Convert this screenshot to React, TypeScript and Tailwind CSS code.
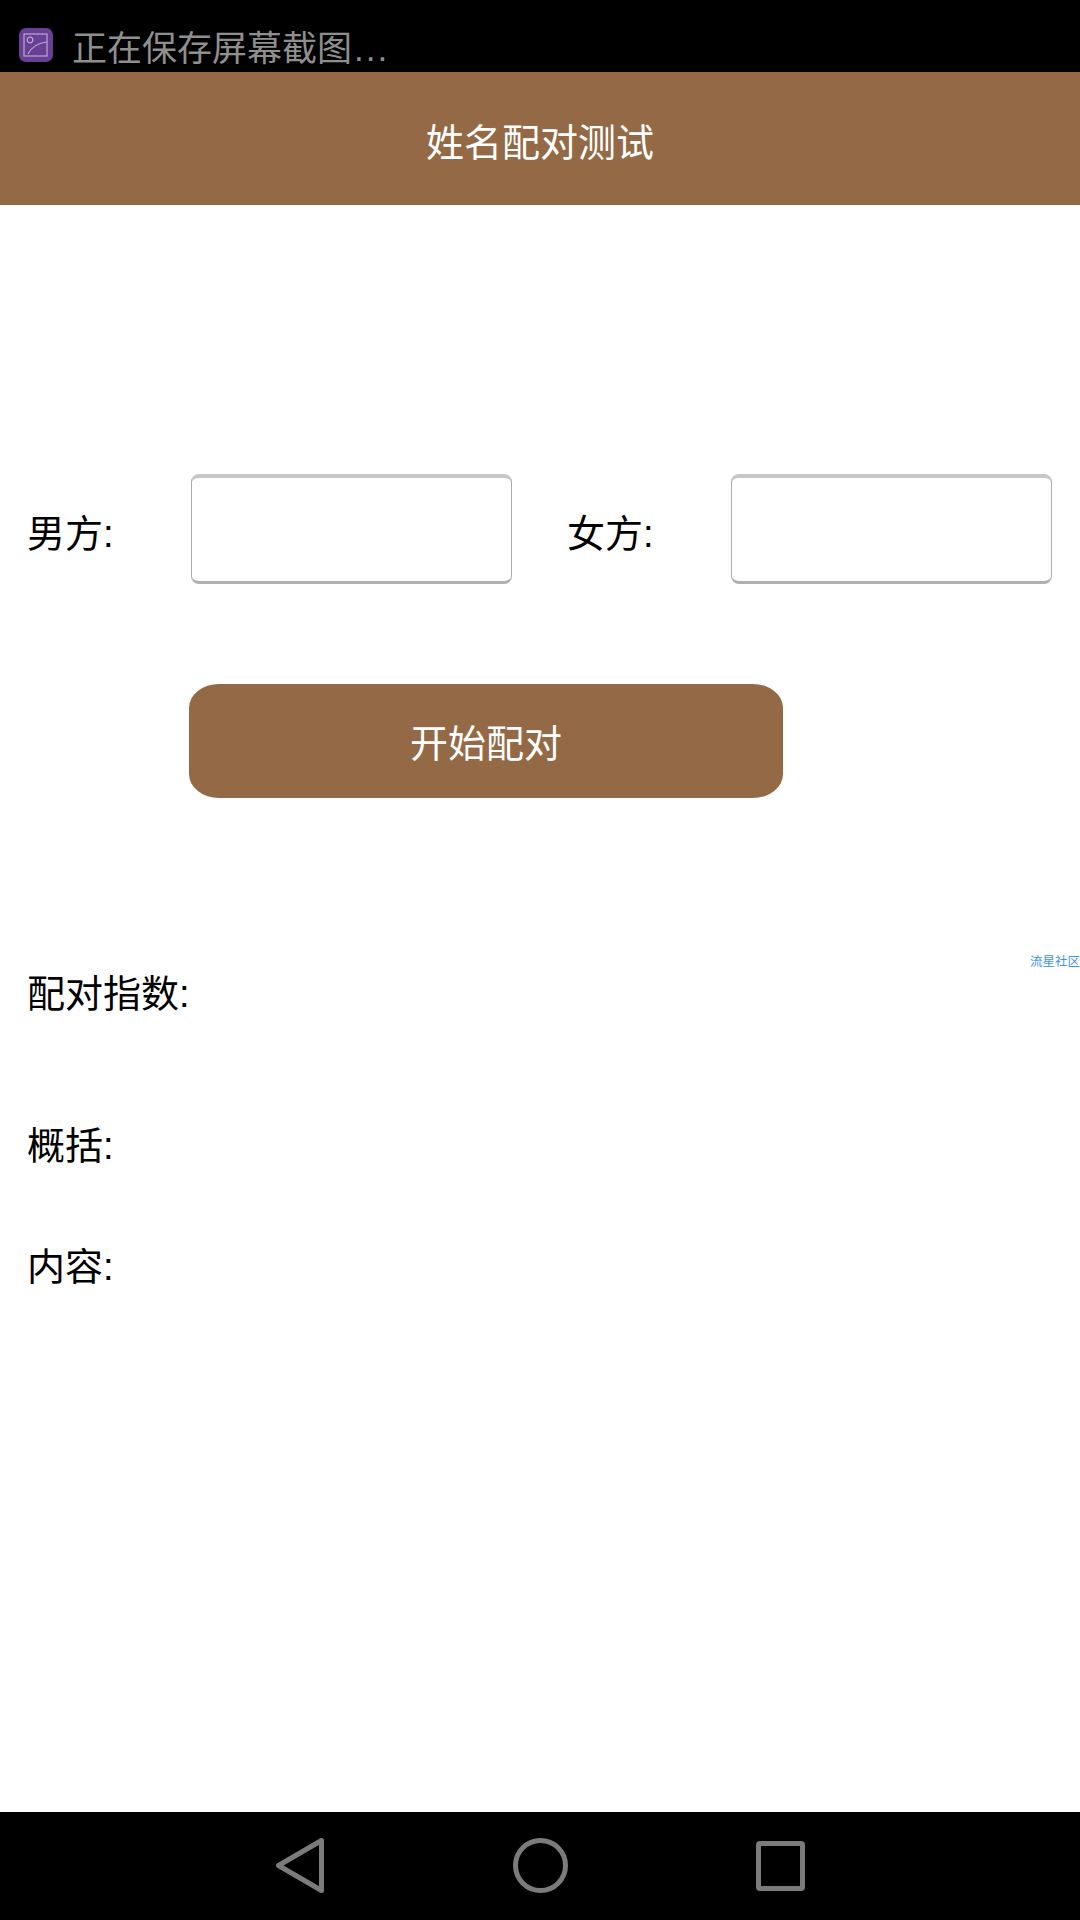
const cjk = "font-['Liberation_Sans','Noto_Sans_CJK_SC',sans-serif]";

function NameInput() {
  return (
    <div className="h-[110px] w-[321px] rounded-[8px] border-x border-t-[4px] border-b-[3px] border-x-[#a9acac] border-t-[#c6c8c8] border-b-[#aeb1b1] bg-white" />
  );
}

function StatusIcon() {
  return (
    <div className="flex h-[34px] w-[34px] items-center justify-center rounded-[7px] bg-[#673f94]">
      <svg width="26" height="24" viewBox="0 0 26 24" fill="none" stroke="#b9a9cc" strokeWidth="1.2">
        <rect x="1" y="1" width="23" height="22" />
        <circle cx="7" cy="7" r="2.8" />
        <path d="M5 21 C 9 13, 15 10, 24 9" />
      </svg>
    </div>
  );
}

export default function App() {
  return (
    <div className={`${cjk} flex h-[1920px] w-[1080px] flex-col overflow-hidden bg-white text-black`}>
      <div className="flex h-[72px] items-start bg-black pl-[19px] pt-[28px]">
        <StatusIcon />
        <span className="ml-[19px] mt-[1px] whitespace-nowrap text-[35px] leading-[40px] text-[#8f8f8f]">
          正在保存屏幕截图<span className="ml-[2px] tracking-[2px]">...</span>
        </span>
      </div>

      <div className="flex h-[133px] items-center justify-center bg-[#946945] pt-[10px] text-[38px] text-white">
        姓名配对测试
      </div>

      <main className="flex-1 text-[38px]">
        <div className="ml-[27px] mt-[269px] flex items-start">
          <div className="w-[164px] pt-[32px] leading-[56px]">男方:</div>
          <NameInput />
          <div className="ml-[55px] w-[164px] pt-[32px] leading-[56px]">女方:</div>
          <NameInput />
        </div>

        <button className="ml-[189px] mt-[100px] flex h-[114px] w-[594px] items-center justify-center rounded-[30px/24px] bg-[#946945] pt-[6px] text-[38px] text-white">
          开始配对
        </button>

        <div className="relative mt-[168px] pl-[27px] leading-[56px]">
          配对指数:
          <span className="absolute right-0 top-[-12px] text-[12.5px] leading-[16px] text-[#3d94e6]">流星社区</span>
        </div>
        <div className="mt-[96px] pl-[27px] leading-[56px]">概括:</div>
        <div className="mt-[65px] pl-[27px] leading-[56px]">内容:</div>
      </main>

      <nav className="flex h-[108px] items-start bg-black pl-[276px] pt-[26px]">
        <svg width="48" height="55" viewBox="0 0 48 55" fill="none" stroke="#7b7b7b" strokeWidth="5" strokeLinejoin="round">
          <path d="M45.5 2.5 L45.5 52.5 L2.5 27.5 Z" />
        </svg>
        <svg className="ml-[189px]" width="55" height="55" viewBox="0 0 55 55" fill="none" stroke="#7b7b7b" strokeWidth="5">
          <circle cx="27.5" cy="27.5" r="25" />
        </svg>
        <svg className="ml-[188px] mt-[3px]" width="49" height="50" viewBox="0 0 49 50" fill="none" stroke="#7b7b7b" strokeWidth="5" strokeLinejoin="round">
          <rect x="2.5" y="2.5" width="44" height="45" rx="1.5" />
        </svg>
      </nav>
    </div>
  );
}
